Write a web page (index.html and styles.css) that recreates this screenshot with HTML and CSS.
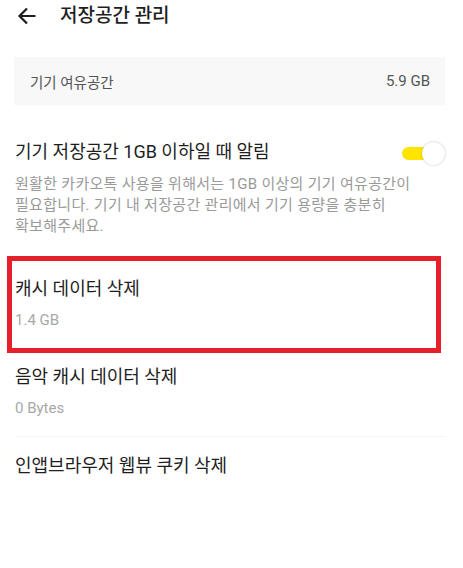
FILE: index.html
```html
<!DOCTYPE html>
<html lang="ko">
<head>
	<meta charset="UTF-8">
	<title>저장공간 관리</title>
	<link rel="stylesheet" href="styles.css">
</head>
<body>
	<div class="head">
		<svg class="back" width="20" height="20" viewBox="0 0 20 20">
			<path d="M18.5 10H2.5M10 2.5L2.5 10L10 17.5" fill="none" stroke="#1e1e1e" stroke-width="2.2"/>
		</svg>
		<span class="head-title">저장공간 관리</span>
	</div>

	<div class="free">
		<span class="free-label">기기 여유공간</span>
		<span class="free-value">5.9 GB</span>
	</div>

	<div class="alarm">
		<div class="alarm-top">
			<span class="item-title">기기 저장공간 1GB 이하일 때 알림</span>
			<span class="toggle"><span class="track"></span><span class="knob"></span></span>
		</div>
		<p class="alarm-desc">원활한 카카오톡 사용을 위해서는 1GB 이상의 기기 여유공간이<br>필요합니다. 기기 내 저장공간 관리에서 기기 용량을 충분히<br>확보해주세요.</p>
	</div>

	<div class="item">
		<div class="item-title">캐시 데이터 삭제</div>
		<div class="item-sub">1.4 GB</div>
		<div class="mark"></div>
	</div>
	<div class="item">
		<div class="item-title">음악 캐시 데이터 삭제</div>
		<div class="item-sub">0 Bytes</div>
	</div>
	<div class="item last">
		<div class="item-title">인앱브라우저 웹뷰 쿠키 삭제</div>
	</div>
</body>
</html>
```

FILE: styles.css
```css
body{
	margin: 0;
	background: #fff;
	font-family: Roboto, "Noto Sans CJK KR", sans-serif;
	color: #1e1e1e;
}
.head{
	height: 32px;
	display: flex;
	align-items: center;
	padding-left: 17px;
}
.back{
	display: block;
}
.head-title{
	margin-left: 23px;
	font-size: 19px;
	font-weight: 500;
	line-height: 32px;
}
.free{
	margin: 25px 18px 0 14px;
	height: 48px;
	background: #f8f8f8;
	display: flex;
	align-items: center;
	justify-content: space-between;
	padding: 0 15px 0 16px;
	color: #555;
}
.free-label{
	font-size: 14.5px;
}
.free-value{
	font-size: 15px;
}
.alarm{
	padding: 34px 18px 24px 15px;
}
.alarm-top{
	display: flex;
	align-items: center;
	justify-content: space-between;
}
.item-title{
	font-size: 18px;
	line-height: 26px;
	color: #1e1e1e;
}
.toggle{
	position: relative;
	width: 43px;
	height: 23px;
	display: flex;
	align-items: center;
	justify-content: flex-end;
	margin-top: 2px;
}
.track{
	position: absolute;
	left: 0;
	top: 5px;
	width: 36px;
	height: 13px;
	border-radius: 7px;
	background: #fee500;
}
.knob{
	position: relative;
	width: 23px;
	height: 23px;
	border-radius: 50%;
	background: #fff;
	box-shadow: 0 0 2px rgba(0,0,0,0.3);
}
.alarm-desc{
	margin: 9px 0 0;
	font-size: 15px;
	letter-spacing: 0.3px;
	line-height: 21px;
	color: #9a9a9a;
}
.item{
	position: relative;
	height: 88px;
	box-sizing: border-box;
	margin: 0 18px 0 15px;
	padding-top: 15px;
	border-bottom: 1px solid #f4f4f4;
}
.item.last{
	border-bottom: none;
	padding-top: 16px;
}
.item-sub{
	margin-top: 8px;
	font-size: 15px;
	line-height: 20px;
	color: #a8a8a8;
}
/* 빨간 표시 박스 */
.mark{
	position: absolute;
	left: -8px;
	top: -5px;
	width: 434px;
	height: 97px;
	box-sizing: border-box;
	border: 5px solid #e5202b;
}
```
